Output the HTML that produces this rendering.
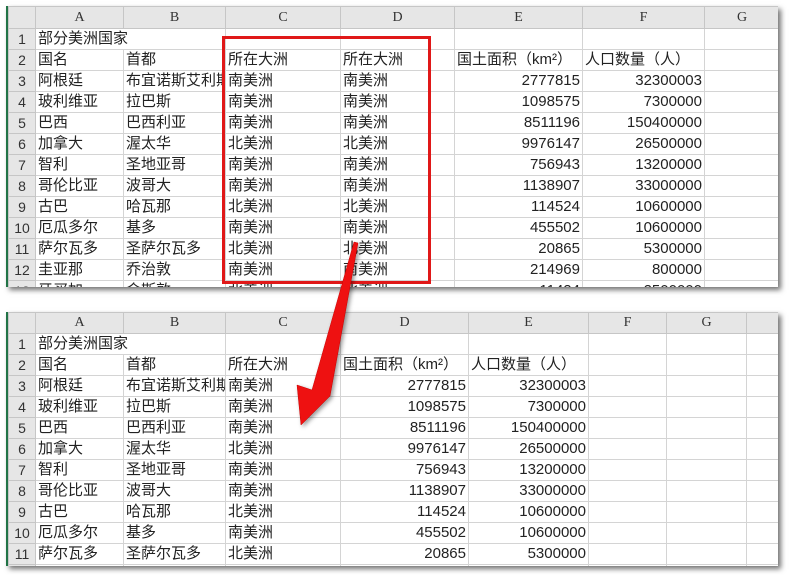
<!DOCTYPE html><html><head><meta charset="utf-8"><style>
body{margin:0;width:790px;height:575px;background:#fff;position:relative;overflow:hidden;font-family:"Liberation Sans","Noto Sans CJK SC",sans-serif}
.sh{position:absolute;background:#fff;overflow:hidden;box-shadow:3px 3px 5px rgba(0,0,0,.55);border-left:2px solid #217346}
table{border-collapse:collapse;table-layout:fixed}
td{border:1px solid #d4d4d4;height:20px;padding:0 2px;font-size:15px;color:#222;white-space:nowrap;overflow:visible;line-height:20px}
tr.h td{background:#e6e6e6;font-family:"Liberation Serif",serif;font-size:14px;text-align:center;color:#333;border-color:#c6c6c6}
td.n{background:#e6e6e6;text-align:center;color:#333;border-color:#c6c6c6;font-size:14px}
td.r{text-align:right}
</style></head><body>
<div class="sh" style="left:6px;top:6px;width:770px;height:281px">
<table style="width:800px">
<colgroup><col style="width:27px"><col style="width:88px"><col style="width:102px"><col style="width:115px"><col style="width:114px"><col style="width:128px"><col style="width:122px"><col style="width:75px"><col></colgroup>
<tr class="h"><td style="height:21px"></td><td>A</td><td>B</td><td>C</td><td>D</td><td>E</td><td>F</td><td>G</td><td></td></tr>
<tr><td class="n">1</td><td colspan="2" style="overflow:visible">部分美洲国家</td><td></td><td></td><td></td><td></td><td></td><td></td></tr>
<tr><td class="n">2</td><td>国名</td><td>首都</td><td>所在大洲</td><td>所在大洲</td><td>国土面积（km²）</td><td>人口数量（人）</td><td></td><td></td></tr>
<tr><td class="n">3</td><td>阿根廷</td><td style="overflow:hidden">布宜诺斯艾利斯</td><td>南美洲</td><td>南美洲</td><td class="r">2777815</td><td class="r">32300003</td><td></td><td></td></tr>
<tr><td class="n">4</td><td>玻利维亚</td><td>拉巴斯</td><td>南美洲</td><td>南美洲</td><td class="r">1098575</td><td class="r">7300000</td><td></td><td></td></tr>
<tr><td class="n">5</td><td>巴西</td><td>巴西利亚</td><td>南美洲</td><td>南美洲</td><td class="r">8511196</td><td class="r">150400000</td><td></td><td></td></tr>
<tr><td class="n">6</td><td>加拿大</td><td>渥太华</td><td>北美洲</td><td>北美洲</td><td class="r">9976147</td><td class="r">26500000</td><td></td><td></td></tr>
<tr><td class="n">7</td><td>智利</td><td>圣地亚哥</td><td>南美洲</td><td>南美洲</td><td class="r">756943</td><td class="r">13200000</td><td></td><td></td></tr>
<tr><td class="n">8</td><td>哥伦比亚</td><td>波哥大</td><td>南美洲</td><td>南美洲</td><td class="r">1138907</td><td class="r">33000000</td><td></td><td></td></tr>
<tr><td class="n">9</td><td>古巴</td><td>哈瓦那</td><td>北美洲</td><td>北美洲</td><td class="r">114524</td><td class="r">10600000</td><td></td><td></td></tr>
<tr><td class="n">10</td><td>厄瓜多尔</td><td>基多</td><td>南美洲</td><td>南美洲</td><td class="r">455502</td><td class="r">10600000</td><td></td><td></td></tr>
<tr><td class="n">11</td><td>萨尔瓦多</td><td>圣萨尔瓦多</td><td>北美洲</td><td>北美洲</td><td class="r">20865</td><td class="r">5300000</td><td></td><td></td></tr>
<tr><td class="n">12</td><td>圭亚那</td><td>乔治敦</td><td>南美洲</td><td>南美洲</td><td class="r">214969</td><td class="r">800000</td><td></td><td></td></tr>
<tr><td class="n">13</td><td>牙买加</td><td>金斯敦</td><td>北美洲</td><td>北美洲</td><td class="r">11424</td><td class="r">2500000</td><td></td><td></td></tr>
</table></div>
<div style="position:absolute;left:222px;top:36px;width:203px;height:242px;border:3px solid #e01818"></div>
<div class="sh" style="left:6px;top:312px;width:770px;height:254px">
<table style="width:800px">
<colgroup><col style="width:27px"><col style="width:88px"><col style="width:102px"><col style="width:115px"><col style="width:128px"><col style="width:120px"><col style="width:78px"><col style="width:80px"><col></colgroup>
<tr class="h"><td style="height:20px"></td><td>A</td><td>B</td><td>C</td><td>D</td><td>E</td><td>F</td><td>G</td><td></td></tr>
<tr><td class="n">1</td><td colspan="2">部分美洲国家</td><td></td><td></td><td></td><td></td><td></td><td></td></tr>
<tr><td class="n">2</td><td>国名</td><td>首都</td><td>所在大洲</td><td>国土面积（km²）</td><td>人口数量（人）</td><td></td><td></td><td></td></tr>
<tr><td class="n">3</td><td>阿根廷</td><td style="overflow:hidden">布宜诺斯艾利斯</td><td>南美洲</td><td class="r">2777815</td><td class="r">32300003</td><td></td><td></td><td></td></tr>
<tr><td class="n">4</td><td>玻利维亚</td><td>拉巴斯</td><td>南美洲</td><td class="r">1098575</td><td class="r">7300000</td><td></td><td></td><td></td></tr>
<tr><td class="n">5</td><td>巴西</td><td>巴西利亚</td><td>南美洲</td><td class="r">8511196</td><td class="r">150400000</td><td></td><td></td><td></td></tr>
<tr><td class="n">6</td><td>加拿大</td><td>渥太华</td><td>北美洲</td><td class="r">9976147</td><td class="r">26500000</td><td></td><td></td><td></td></tr>
<tr><td class="n">7</td><td>智利</td><td>圣地亚哥</td><td>南美洲</td><td class="r">756943</td><td class="r">13200000</td><td></td><td></td><td></td></tr>
<tr><td class="n">8</td><td>哥伦比亚</td><td>波哥大</td><td>南美洲</td><td class="r">1138907</td><td class="r">33000000</td><td></td><td></td><td></td></tr>
<tr><td class="n">9</td><td>古巴</td><td>哈瓦那</td><td>北美洲</td><td class="r">114524</td><td class="r">10600000</td><td></td><td></td><td></td></tr>
<tr><td class="n">10</td><td>厄瓜多尔</td><td>基多</td><td>南美洲</td><td class="r">455502</td><td class="r">10600000</td><td></td><td></td><td></td></tr>
<tr><td class="n">11</td><td>萨尔瓦多</td><td>圣萨尔瓦多</td><td>北美洲</td><td class="r">20865</td><td class="r">5300000</td><td></td><td></td><td></td></tr>
<tr><td class="n">12</td><td></td><td></td><td></td><td></td><td></td><td></td><td></td><td></td></tr>
</table></div>
<svg style="position:absolute;left:0;top:0" width="790" height="575"><polygon points="354,242 358,243 330,396 301,425 297,385 312,390" fill="#ee1111" stroke="#c00" stroke-width="0.5" style="filter:drop-shadow(2px 2px 2px rgba(0,0,0,.4))"/></svg>
</body></html>
